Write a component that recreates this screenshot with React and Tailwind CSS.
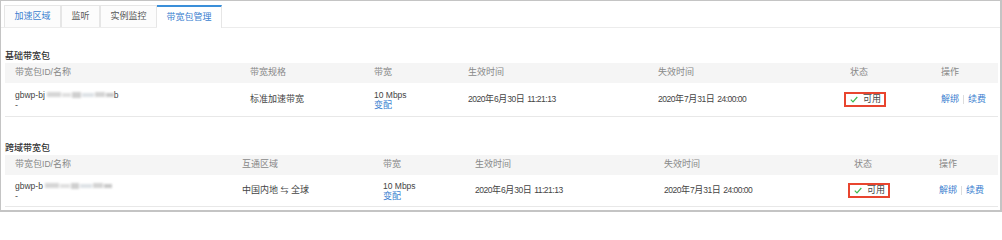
const font = { fontFamily: '"Liberation Sans", "Noto Sans CJK SC", sans-serif' }

const tabs = [
  { label: '加速区域', w: 'w-[57px]', cls: 'text-[#3b7fd0]' },
  { label: '监听', w: 'w-[39px]', cls: 'text-[#555]' },
  { label: '实例监控', w: 'w-[57px]', cls: 'text-[#555]' },
]

// latin runs are a touch smaller than the CJK glyphs in the reference
function L({ children, tight }) {
  return <span className={tight ? 'text-[8.5px] tracking-[-0.5px]' : 'text-[8.5px]'}>{children}</span>
}

function Blurred({ tail }) {
  return (
    <span className="inline-flex items-center">
      <span className="ml-[2px] inline-flex h-[7px] w-[67px] items-center gap-[1px] blur-[1.2px]">
        <span className="h-[5px] w-[14px] bg-[#d6d6d6]" />
        <span className="h-[4px] w-[10px] bg-[#e0e0e0]" />
        <span className="h-[6px] w-[9px] bg-[#cfcfcf]" />
        <span className="h-[4px] w-[12px] bg-[#dde2e6]" />
        <span className="h-[5px] w-[10px] bg-[#d4d4d4]" />
        <span className="h-[4px] w-[8px] bg-[#c8c8c8]" />
      </span>
      {tail && <L>{tail}</L>}
    </span>
  )
}

function Status() {
  return (
    <span className="-ml-[6px] inline-flex h-[15px] items-center gap-[5px] border-2 border-[#e8452f] pl-[4px] pr-[3px] text-[#444]">
      <svg width="8" height="7" viewBox="0 0 8 7" className="shrink-0">
        <path d="M0.8 3.6 L3 5.8 L7.3 1" fill="none" stroke="#3dba4e" strokeWidth="1.2" />
      </svg>
      <span>可用</span>
    </span>
  )
}

function Actions() {
  return (
    <span className="inline-flex items-center text-[#3b7fd0]">
      解绑
      <span className="mx-[4px] h-[9px] w-px bg-[#ddd]" />
      续费
    </span>
  )
}

function Table({ title, cols, row, titleMt }) {
  return (
    <div className={titleMt}>
      <div className="pl-[4px] text-[9px] leading-[14px] font-medium text-[#333]">{title}</div>
      <div className="ml-[4px] w-[993px]">
        <div className="flex h-[20px] items-center bg-[#f5f5f5] text-[#888]">
          {cols.map((c, i) => (
            <div key={i} className={`${c.w} pl-[10px] shrink-0`}>{c.label}</div>
          ))}
        </div>
        <div className={`flex ${row.h} items-center border-b border-[#e8e8e8] text-[#444]`}>
          {row.cells.map((cell, i) => (
            <div key={i} className={`${cols[i].w} pl-[10px] shrink-0`}>{cell}</div>
          ))}
        </div>
      </div>
    </div>
  )
}

const idHead = <>带宽包<L>ID/</L>名称</>

const cols1 = [
  { label: idHead, w: 'w-[235px]' },
  { label: '带宽规格', w: 'w-[124px]' },
  { label: '带宽', w: 'w-[94px]' },
  { label: '生效时间', w: 'w-[190px]' },
  { label: '失效时间', w: 'w-[192px]' },
  { label: '状态', w: 'w-[91px]' },
  { label: '操作', w: 'w-[67px]' },
]

const cols2 = [
  { label: idHead, w: 'w-[227px]' },
  { label: '互通区域', w: 'w-[141px]' },
  { label: '带宽', w: 'w-[92px]' },
  { label: '生效时间', w: 'w-[189px]' },
  { label: '失效时间', w: 'w-[190px]' },
  { label: '状态', w: 'w-[85px]' },
  { label: '操作', w: 'w-[69px]' },
]

function IdCell({ prefix, tail }) {
  return (
    <div className="leading-[10px]">
      <div className="flex items-center"><L>{prefix}</L><Blurred tail={tail} /></div>
      <div>-</div>
    </div>
  )
}

function Bandwidth() {
  return (
    <div className="leading-[10px]">
      <div><L>10 Mbps</L></div>
      <div className="text-[#3b7fd0]">变配</div>
    </div>
  )
}

function DateText({ y, m, d, t }) {
  return (
    <span>
      <L tight>{y}</L>年<L tight>{m}</L>月<L tight>{d}</L>日 <L tight>{t}</L>
    </span>
  )
}

export default function App() {
  const start = <DateText y="2020" m="6" d="30" t="11:21:13" />
  const end = <DateText y="2020" m="7" d="31" t="24:00:00" />
  const row1 = {
    h: 'h-[34px]',
    cells: [
      <IdCell prefix="gbwp-bj" tail="b" />,
      '标准加速带宽',
      <Bandwidth />,
      start,
      end,
      <Status />,
      <Actions />,
    ],
  }
  const row2 = {
    h: 'h-[32px]',
    cells: [
      <IdCell prefix="gbwp-b" />,
      <span>中国内地 <span className="text-[8px]">⇆</span> 全球</span>,
      <Bandwidth />,
      start,
      end,
      <Status />,
      <Actions />,
    ],
  }

  return (
    <div
      className="h-[212px] w-[1002px] overflow-hidden border-t border-l border-r-2 border-b-2 border-[#c4c4c4] bg-white text-[9px]"
      style={font}
    >
      <div className="flex h-[27px] items-end border-b border-[#ececec] pl-[3px]">
        {tabs.map((t) => (
          <div
            key={t.label}
            className={`${t.w} flex h-[22px] items-center justify-center border border-b-0 border-[#e6e6e6] bg-[#fcfcfc] ${t.cls}`}
          >
            {t.label}
          </div>
        ))}
        <div className="-mb-px flex h-[23px] w-[65px] items-center justify-center border-t-2 border-r border-t-[#3b8fd9] border-r-[#e6e6e6] bg-white text-[#3b7fd0]">
          带宽包管理
        </div>
      </div>
      <Table title="基础带宽包" cols={cols1} row={row1} titleMt="mt-[21px]" />
      <Table title="跨域带宽包" cols={cols2} row={row2} titleMt="mt-[24px]" />
    </div>
  )
}
